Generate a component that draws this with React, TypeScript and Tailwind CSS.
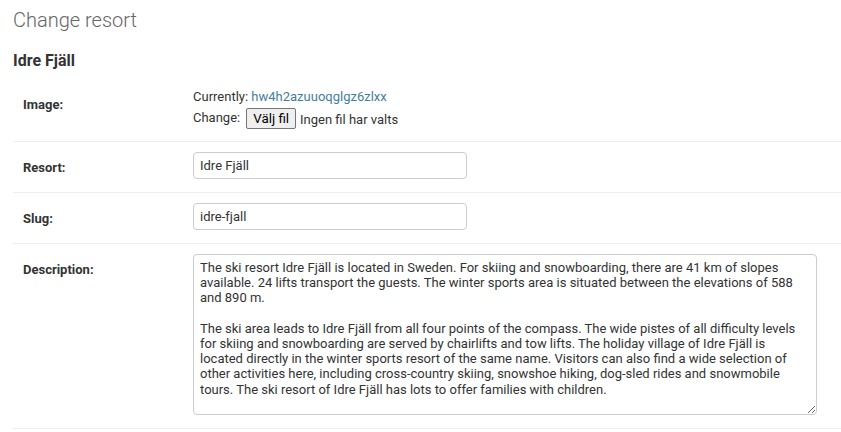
const description = `The ski resort Idre Fjäll is located in Sweden. For skiing and snowboarding, there are 41 km of slopes available. 24 lifts transport the guests. The winter sports area is situated between the elevations of 588 and 890 m.

The ski area leads to Idre Fjäll from all four points of the compass. The wide pistes of all difficulty levels for skiing and snowboarding are served by chairlifts and tow lifts. The holiday village of Idre Fjäll is located directly in the winter sports resort of the same name. Visitors can also find a wide selection of other activities here, including cross-country skiing, snowshoe hiking, dog-sled rides and snowmobile tours. The ski resort of Idre Fjäll has lots to offer families with children.`;

/**
 * One row of the aligned admin form: bold label on the left, widget on the right
 */
function FormRow({ label, children }: { label: string; children: React.ReactNode }) {
  return (
    <div className="flex border-b border-[#eeeeee] p-[10px]">
      <label className="w-[170px] shrink-0 pr-[10px] pt-[8px] text-[13px] leading-[16px] font-bold text-[#333]">
        {label}
      </label>
      <div className="flex-1">{children}</div>
    </div>
  );
}

export default function App() {
  return (
    <div className="min-h-screen bg-white pl-[13px] pt-[8px] font-['Roboto','Liberation_Sans',sans-serif] text-[#333]">
      <h1 className="text-[20px] leading-[24px] font-light text-[#666]">Change resort</h1>

      <h2 className="mt-[19px] text-[16px] leading-[20px] font-bold text-[#333]">Idre Fjäll</h2>

      <fieldset className="mt-[8px]">
        <FormRow label="Image:">
          <div className="text-[13px]">
            <div className="leading-[16px]">
              Currently:{" "}
              <a href="#" className="text-[#447e9b]">
                hw4h2azuuoqglgz6zlxx
              </a>
            </div>
            <div className="mt-[3px] flex h-[23px] items-start">
              <span className="mt-[2px] leading-[16px]">Change:</span>
              <button className="ml-[6px] h-[21px] rounded-[2px] border border-[#767676] bg-[#efefef] px-[6px] text-[13.33px] leading-[17px] text-black">
                Välj fil
              </button>
              <span className="ml-[4px] mt-[4px] leading-[16px]">Ingen fil har valts</span>
            </div>
          </div>
        </FormRow>

        <FormRow label="Resort:">
          <div className="h-[30px]">
            <input
              type="text"
              defaultValue="Idre Fjäll"
              className="h-[27px] w-[274px] rounded-[4px] border border-[#cccccc] px-[6px] py-[5px] text-[13px] leading-[15px] text-[#333] outline-none"
            />
          </div>
        </FormRow>

        <FormRow label="Slug:">
          <div className="h-[30px]">
            <input
              type="text"
              defaultValue="idre-fjall"
              className="h-[27px] w-[274px] rounded-[4px] border border-[#cccccc] px-[6px] py-[5px] text-[13px] leading-[15px] text-[#333] outline-none"
            />
          </div>
        </FormRow>

        <FormRow label="Description:">
          <div className="h-[164px]">
            <textarea
              defaultValue={description}
              className="block h-[161px] w-[624px] resize rounded-[4px] border border-[#cccccc] px-[6px] py-[5px] text-[13px] leading-[15.2px] text-[#333] outline-none"
            />
          </div>
        </FormRow>
      </fieldset>
    </div>
  );
}
